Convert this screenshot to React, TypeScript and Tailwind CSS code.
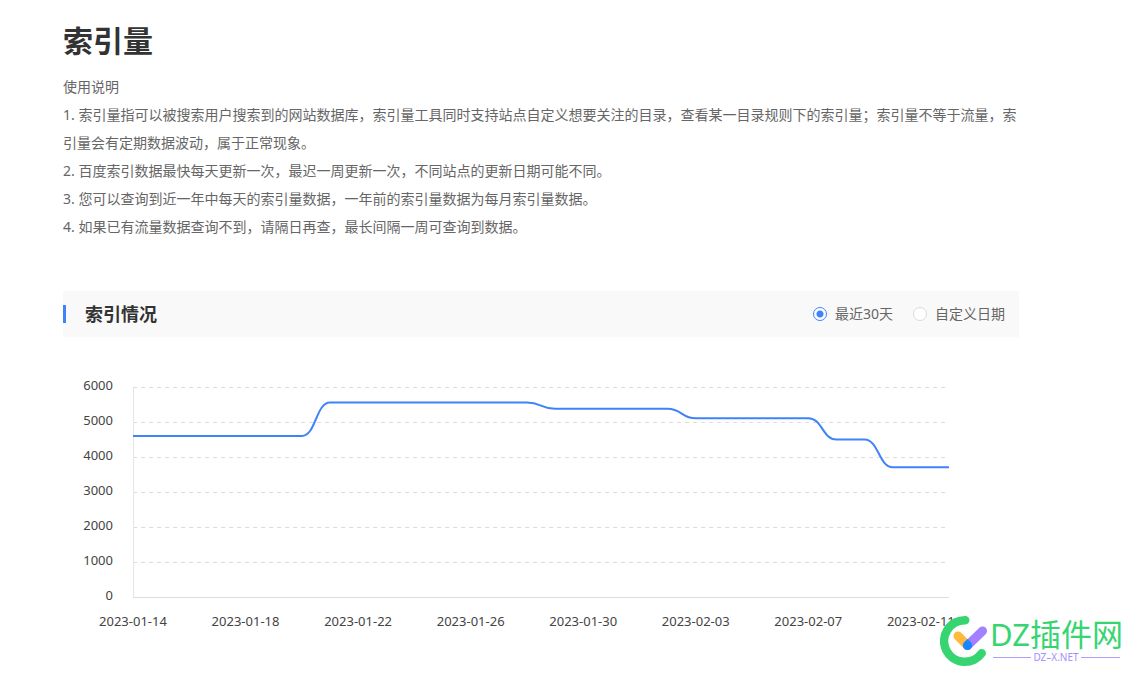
import { useState } from 'react'

interface Point {
  x: number
  y: number
}

const NOTES = [
  '1. 索引量指可以被搜索用户搜索到的网站数据库，索引量工具同时支持站点自定义想要关注的目录，查看某一目录规则下的索引量；索引量不等于流量，索引量会有定期数据波动，属于正常现象。',
  '2. 百度索引数据最快每天更新一次，最迟一周更新一次，不同站点的更新日期可能不同。',
  '3. 您可以查询到近一年中每天的索引量数据，一年前的索引量数据为每月索引量数据。',
  '4. 如果已有流量数据查询不到，请隔日再查，最长间隔一周可查询到数据。',
]

const RANGES = [
  { id: 'last30', label: '最近30天' },
  { id: 'custom', label: '自定义日期' },
]

// One value per day, starting on START
const START = Date.UTC(2023, 0, 14)
const VALUES = [
  4614, 4614, 4614, 4614, 4614, 4614, 4614,
  5572, 5572, 5572, 5572, 5572, 5572, 5572, 5572,
  5390, 5390, 5390, 5390, 5390,
  5120, 5120, 5120, 5120, 5120,
  4515, 4515,
  3725, 3725, 3725,
]
const TICKS = [6000, 5000, 4000, 3000, 2000, 1000, 0]

const LEFT = 70
const TOP = 50
const PLOT_W = 816
const PLOT_H = 210

const xAt = (i: number) => LEFT + (i * PLOT_W) / (VALUES.length - 1)
const yAt = (v: number) => TOP + PLOT_H - (v / 6000) * PLOT_H

function dayLabel(i: number): string {
  return new Date(START + i * 86400000).toISOString().slice(0, 10)
}

function smoothPath(points: Point[]): string {
  return points
    .map((p, i) => {
      if (i === 0) return `M${p.x} ${p.y}`
      const prev = points[i - 1]
      const mid = (prev.x + p.x) / 2
      return `C${mid} ${prev.y} ${mid} ${p.y} ${p.x} ${p.y}`
    })
    .join(' ')
}

function IndexChart() {
  const points = VALUES.map((v, i) => ({ x: xAt(i), y: yAt(v) + 0.5 }))

  return (
    <svg viewBox="0 0 956 300" className="block w-full fill-[#444] text-[13px]" role="img">
      {TICKS.map(t => (
        <g key={t}>
          <text x={50} y={yAt(t) + 3} textAnchor="end">{t}</text>
          <line
            x1={LEFT}
            x2={LEFT + PLOT_W}
            y1={yAt(t) + 0.5}
            y2={yAt(t) + 0.5}
            stroke="#dcdcdc"
            strokeDasharray={t === 0 ? undefined : '4 4'}
          />
        </g>
      ))}
      <line x1={LEFT + 0.5} x2={LEFT + 0.5} y1={TOP} y2={TOP + PLOT_H} stroke="#e6e6e6" />
      {VALUES.map((_, i) =>
        i % 4 === 0 ? (
          <text key={i} x={xAt(i)} y={289} textAnchor="middle">{dayLabel(i)}</text>
        ) : null
      )}
      <path d={smoothPath(points)} fill="none" stroke="#3f83fb" strokeWidth={2} />
    </svg>
  )
}

function SiteLogo() {
  return (
    <svg width={182} height={54} viewBox="0 0 182 54" className="absolute right-[18px] bottom-[13px]">
      <g fill="none" strokeLinecap="round">
        <path d="M25.2 6.2A20.8 20.8 0 1 0 41.7 39.3" stroke="#37d572" strokeWidth={8.5} />
        <path d="M18 22L27.5 31.5" stroke="#ffb93e" strokeWidth={9} />
        <path d="M42.5 17L27.5 31.5" stroke="#a280ff" strokeWidth={9} />
      </g>
      <path d="M27.5 25L30.8 28.3A4.6 4.6 0 1 1 24.2 28.3Z" fill="#1688ff" />
      <text x={50} y={32} fontSize={31} fill="#37d572">DZ插件网</text>
      <path d="M53 43.5H91M141 43.5H180" stroke="#b39bff" />
      <text x={116} y={47} fontSize={10} textAnchor="middle" fill="#a58bff">DZ–X.NET</text>
    </svg>
  )
}

export default function App() {
  const [range, setRange] = useState('last30')

  return (
    <div className="relative min-h-screen bg-white font-['Noto_Sans','Noto_Sans_CJK_SC',sans-serif] text-[#666]">
      <main className="ml-[63px] mr-[121px] pt-[21px]">
        <h1 className="text-[30px] leading-10 font-bold text-[#333]">索引量</h1>

        <section className="mt-3 text-sm leading-7">
          <p>使用说明</p>
          {NOTES.map(note => (
            <p key={note}>{note}</p>
          ))}
        </section>

        <section className="mt-[50px]">
          <div className="flex h-[46px] items-center justify-between bg-[#f9f9f9] pr-3.5">
            <div className="flex items-center gap-[19px]">
              <span className="h-[18px] w-[3px] bg-[#3f83fb]" />
              <h2 className="text-lg font-bold text-[#333]">索引情况</h2>
            </div>
            <div className="flex gap-5 text-sm">
              {RANGES.map(({ id, label }) => (
                <label key={id} className="flex cursor-pointer items-center gap-2">
                  <input
                    type="radio"
                    name="range"
                    value={id}
                    checked={range === id}
                    onChange={() => setRange(id)}
                    className="size-3.5 appearance-none rounded-full border border-[#dcdcdc] bg-white checked:border-[#3f83fb] checked:bg-[radial-gradient(circle,#3f83fb_3px,#fff_4px)]"
                  />
                  {label}
                </label>
              ))}
            </div>
          </div>
          <IndexChart />
        </section>
      </main>
      <SiteLogo />
    </div>
  )
}
